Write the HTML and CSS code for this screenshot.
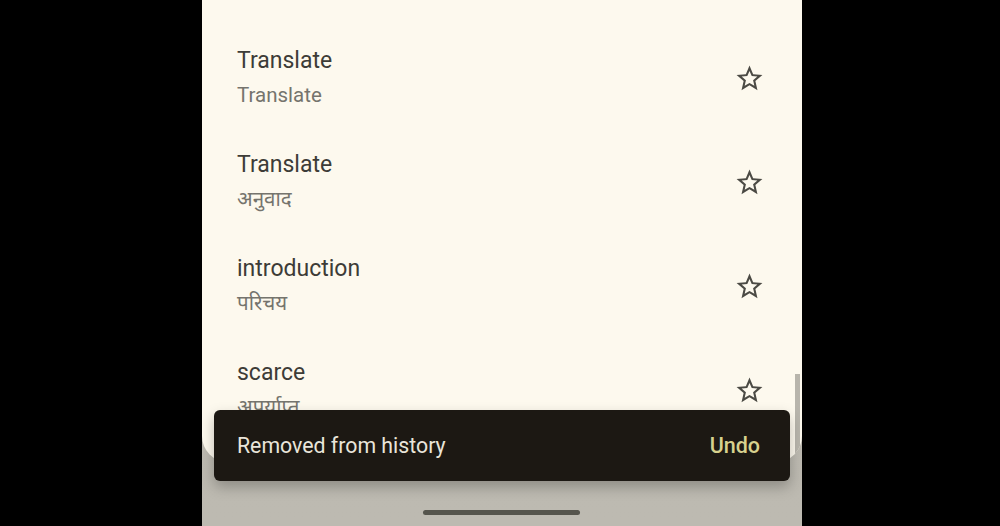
FILE: index.html
```html
<!DOCTYPE html>
<html lang="en">
<head>
  <meta charset="UTF-8" />
  <meta name="viewport" content="width=device-width, initial-scale=1.0" />
  <title>History</title>
  <link rel="stylesheet" href="styles.css">
</head>
<body>
  <div class="screen">
    <div class="sheet">
      <ul class="history">
        <li class="entry">
          <div class="words">
            <span class="source">hello</span>
            <span class="target">नमस्ते</span>
          </div>
        </li>
        <li class="entry">
          <div class="words">
            <span class="source">Translate</span>
            <span class="target">Translate</span>
          </div>
          <svg class="star" viewBox="0 0 24 24"><path d="M22 9.24l-7.19-.62L12 2 9.19 8.63 2 9.24l5.46 4.73L5.82 21 12 17.27 18.18 21l-1.63-7.03L22 9.24zM12 15.4l-3.76 2.27 1-4.28-3.32-2.88 4.38-.38L12 6.1l1.71 4.04 4.38.38-3.32 2.88 1 4.28L12 15.4z"/></svg>
        </li>
        <li class="entry">
          <div class="words">
            <span class="source">Translate</span>
            <span class="target">अनुवाद</span>
          </div>
          <svg class="star" viewBox="0 0 24 24"><path d="M22 9.24l-7.19-.62L12 2 9.19 8.63 2 9.24l5.46 4.73L5.82 21 12 17.27 18.18 21l-1.63-7.03L22 9.24zM12 15.4l-3.76 2.27 1-4.28-3.32-2.88 4.38-.38L12 6.1l1.71 4.04 4.38.38-3.32 2.88 1 4.28L12 15.4z"/></svg>
        </li>
        <li class="entry">
          <div class="words">
            <span class="source">introduction</span>
            <span class="target">परिचय</span>
          </div>
          <svg class="star" viewBox="0 0 24 24"><path d="M22 9.24l-7.19-.62L12 2 9.19 8.63 2 9.24l5.46 4.73L5.82 21 12 17.27 18.18 21l-1.63-7.03L22 9.24zM12 15.4l-3.76 2.27 1-4.28-3.32-2.88 4.38-.38L12 6.1l1.71 4.04 4.38.38-3.32 2.88 1 4.28L12 15.4z"/></svg>
        </li>
        <li class="entry">
          <div class="words">
            <span class="source">scarce</span>
            <span class="target">अपर्याप्त</span>
          </div>
          <svg class="star" viewBox="0 0 24 24"><path d="M22 9.24l-7.19-.62L12 2 9.19 8.63 2 9.24l5.46 4.73L5.82 21 12 17.27 18.18 21l-1.63-7.03L22 9.24zM12 15.4l-3.76 2.27 1-4.28-3.32-2.88 4.38-.38L12 6.1l1.71 4.04 4.38.38-3.32 2.88 1 4.28L12 15.4z"/></svg>
        </li>
      </ul>
      <div class="scrollbar"></div>
    </div>

    <div class="snackbar">
      <span>Removed from history</span>
      <button class="undo">Undo</button>
    </div>

    <div class="gesture-bar"></div>
  </div>
</body>
</html>
```

FILE: styles.css
```css
body {
  margin: 0;
  background: #000;
  font-family: Roboto, "Noto Sans", "Noto Sans Devanagari", "Lohit Devanagari", sans-serif;
  height: 526px;
  overflow: hidden;
}
.screen {
  position: relative;
  width: 600px;
  height: 526px;
  margin-left: 202px;
  background: linear-gradient(#a9a69d, #bbb8af 30px, #bdbab1);
  overflow: hidden;
}
.sheet {
  position: relative;
  height: 462px;
  background: #fdf9ee;
  border-radius: 0 0 26px 26px;
  overflow: hidden;
}
.history {
  list-style: none;
  margin: -79px 0 0;
  padding: 0;
}
.entry {
  height: 104px;
  display: flex;
  align-items: center;
  justify-content: space-between;
  padding: 0 37px 0 35px;
}
.words {
  display: flex;
  flex-direction: column;
  gap: 7px;
}
.source {
  font-size: 23px;
  line-height: 28px;
  color: #3d3c37;
}
.target {
  font-size: 20.5px;
  line-height: 26px;
  color: #75746d;
}
.star {
  width: 31px;
  height: 31px;
  fill: #4b4a44;
  margin-top: 2px;
}
.scrollbar {
  position: absolute;
  right: 2px;
  top: 374px;
  width: 5px;
  height: 88px;
  background: #b8b5ac;
}
.snackbar {
  position: absolute;
  left: 12px;
  right: 12px;
  top: 410px;
  height: 71px;
  box-sizing: border-box;
  padding: 0 30px 0 23px;
  display: flex;
  align-items: center;
  justify-content: space-between;
  background: #1c1813;
  border-radius: 6px;
  box-shadow: 0 6px 14px rgba(0, 0, 0, 0.25);
  color: #e9e5da;
  font-size: 21.3px;
}
.undo {
  background: none;
  border: none;
  padding: 0;
  font-family: inherit;
  font-size: 21.5px;
  font-weight: 500;
  color: #d7d18e;
}
.gesture-bar {
  position: absolute;
  left: 221px;
  top: 510px;
  width: 157px;
  height: 5px;
  border-radius: 3px;
  background: #56554d;
}
```
